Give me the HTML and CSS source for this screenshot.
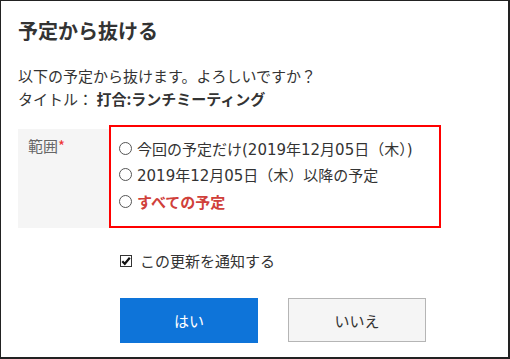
FILE: index.html
```html
<!DOCTYPE html>
<html lang="ja">
<head>
<meta charset="utf-8">
<title>予定から抜ける</title>
<link rel="stylesheet" href="styles.css">
</head>
<body>
<div class="dialog">
  <h1 class="title">予定から抜ける</h1>
  <p class="msg">以下の予定から抜けます。よろしいですか？</p>
  <p class="msg">タイトル： <b>打合:ランチミーティング</b></p>
  <div class="form-row">
    <div class="label">範囲<span class="req">*</span></div>
    <div class="options">
      <div class="opt"><span class="radio"></span>今回の予定だけ(2019年12月05日（木）)</div>
      <div class="opt"><span class="radio"></span>2019年12月05日（木）以降の予定</div>
      <div class="opt all"><span class="radio"></span>すべての予定</div>
    </div>
  </div>
  <div class="notify">
    <svg class="check" width="12" height="12" viewBox="0 0 12 12"><rect x="0.5" y="0.5" width="11" height="11" fill="#fff" stroke="#333"/><path d="M2.3 6.2 L4.8 8.8 L9.8 2.8" fill="none" stroke="#111" stroke-width="2.2"/></svg>
    <span>この更新を通知する</span>
  </div>
  <div class="buttons">
    <button class="btn yes">はい</button>
    <button class="btn no">いいえ</button>
  </div>
</div>
</body>
</html>
```
FILE: styles.css
```css
* { box-sizing: border-box; }
html, body { margin: 0; padding: 0; background: #fff; }
body {
  font-family: "Noto Sans CJK JP", "Noto Sans", sans-serif;
  color: #333;
}
.dialog {
  width: 510px;
  height: 359px;
  border: 1px solid #222;
  border-right-width: 2px;
  border-bottom-width: 2px;
  padding: 18px 0 0 17px;
  overflow: hidden;
}
.title {
  margin: 0;
  font-size: 20px;
  line-height: 24px;
  font-weight: bold;
  color: #333;
}
.msg {
  margin: 0;
  font-size: 15px;
  line-height: 23px;
}
.title + .msg { margin-top: 21px; }
.msg b { font-weight: bold; }
.form-row {
  display: flex;
  align-items: flex-end;
  margin-top: 15px;
}
.label {
  width: 91px;
  height: 99px;
  background: #f5f5f5;
  color: #666;
  font-size: 15px;
  line-height: 23px;
  padding: 5px 0 0 10px;
}
.req { color: #e33; }
.options {
  width: 332px;
  height: 103px;
  border: 2px solid #f00;
  padding: 8px 0 0 8px;
  font-size: 15px;
  font-family: "DejaVu Sans", "Noto Sans CJK JP", sans-serif;
}
.opt {
  display: flex;
  align-items: center;
  height: 26.5px;
  white-space: nowrap;
}
.radio {
  width: 13px;
  height: 13px;
  border: 1px solid #555;
  border-radius: 50%;
  margin-right: 5px;
  flex: none;
}
.opt.all {
  color: #d0403a;
  font-weight: bold;
}
.notify {
  display: flex;
  align-items: center;
  margin: 21px 0 0 102px;
  font-size: 15px;
  line-height: 23px;
}
.check { margin-right: 8px; flex: none; }
.buttons {
  display: flex;
  gap: 30px;
  margin: 26px 0 0 102px;
}
.btn {
  width: 138px;
  height: 45px;
  font-family: inherit;
  font-size: 15px;
  border: 1px solid #b5b5b5;
  background: #f5f5f5;
  color: #333;
  padding: 0;
}
.btn.yes {
  background: #0e74d9;
  border-color: #0e74d9;
  color: #fff;
}
.btn.no { height: 44px; }
```
